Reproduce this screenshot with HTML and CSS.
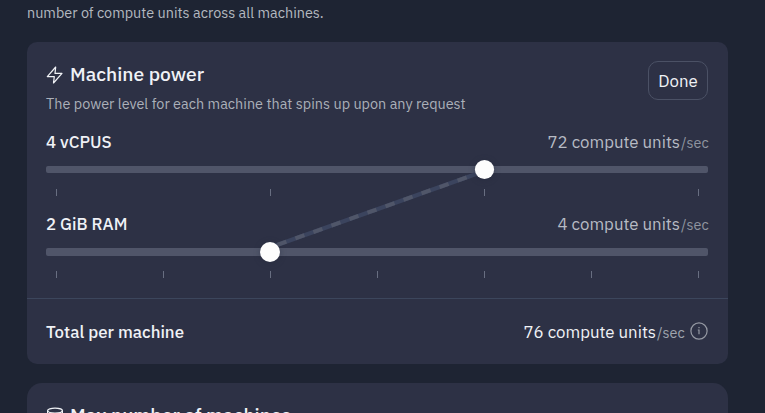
FILE: index.html
```
<!DOCTYPE html>
<html lang="en">
<head>
<meta charset="utf-8">
<title>Machine power</title>
<link rel="stylesheet" href="styles.css">
</head>
<body>
<main class="page">
  <p class="intro">number of compute units across all machines.</p>
  <section class="card">
    <header class="card-head">
      <div>
        <h2 class="title">
          <svg class="icon" width="18" height="18" viewBox="0 0 18 18"><path d="M9.7 1 1.3 10.6H8.3L7.5 17 16 7.4H9L9.7 1Z" fill="none" stroke="currentColor" stroke-width="1.2" stroke-linejoin="round"/></svg>
          <span>Machine power</span>
        </h2>
        <p class="desc">The power level for each machine that spins up upon any request</p>
      </div>
      <button class="done">Done</button>
    </header>
    <div class="sliders">
      <div class="row"><span class="label">4 vCPUS</span><span class="cost">72 compute units<span class="sec">/sec</span></span></div>
      <div class="track track-cpu"></div>
      <div class="ticks"><i></i><i></i><i></i><i></i></div>
      <div class="row"><span class="label">2 GiB RAM</span><span class="cost">4 compute units<span class="sec">/sec</span></span></div>
      <div class="track track-ram"></div>
      <div class="ticks ticks-ram"><i></i><i></i><i></i><i></i><i></i><i></i><i></i></div>
      <svg class="link" width="662" height="140" viewBox="46 130 662 140">
        <path d="M270 247.5 484.5 171" stroke="#3b445e" stroke-width="4"/>
        <path d="M270 247.5 484.5 171" stroke="#505669" stroke-width="4" stroke-dasharray="9.57 9.57" stroke-dashoffset="11.35"/>
        <circle class="thumb" cx="484.5" cy="169.5" r="9.6"/>
        <circle class="thumb" cx="270" cy="252" r="10"/>
      </svg>
    </div>
    <footer class="total">
      <span class="label">Total per machine</span>
      <span class="cost cost-total">76 compute units<span class="sec">/sec</span></span>
      <svg class="info" width="18" height="18" viewBox="0 0 18 18"><circle cx="9" cy="9" r="8.1" fill="none" stroke="currentColor" stroke-width="1.2"/><path d="M7.8 8H9v4.3M9 5v1.2" fill="none" stroke="currentColor" stroke-width="1.2"/></svg>
    </footer>
  </section>
  <section class="card card-next">
    <h2 class="title title-next">
      <svg class="icon" width="18" height="18" viewBox="0 0 18 18"><g fill="none" stroke="currentColor" stroke-width="1.2"><ellipse cx="9" cy="3.6" rx="7.4" ry="2.5"/><path d="M1.6 3.6v10.8c0 3.4 14.8 3.4 14.8 0V3.6M1.6 9c0 3.4 14.8 3.4 14.8 0"/></g></svg>
      <span>Max number of machines</span>
    </h2>
  </section>
</main>
</body>
</html>
```
FILE: styles.css
```
* { box-sizing: border-box; }
body {
  margin: 0;
  background: #1e2433;
  color: #f0f2f6;
  font-family: "IBM Plex Sans", Roboto, "Liberation Sans", sans-serif;
  font-size: 16.85px;
}
.page { width: 701px; height: 413px; margin-left: 27px; overflow: hidden; }
p, h2 { margin: 0; white-space: nowrap; }
.intro { height: 42px; padding-top: 3px; font-size: 14.42px; line-height: 20px; color: #b4b9c0; }
.card { height: 322px; border-radius: 10px; background: #2d3145; }
.card-head { display: flex; justify-content: space-between; align-items: flex-start; height: 88px; padding: 19px 20px 0 19px; }
.title { display: flex; align-items: center; gap: 6px; height: 27px; font-size: 19.25px; line-height: 25px; font-weight: 500; }
.title span { margin-top: -2px; }
.icon { flex: none; }
.desc { margin-top: 6px; font-size: 14.43px; line-height: 20px; color: #abb0b9; }
.done { width: 60px; height: 39px; padding: 0; border: 1px solid #4b5165; border-radius: 10px; background: transparent; color: #f0f2f6; font: inherit; }
.sliders { position: relative; height: 168px; padding: 0 20px 0 19px; }
.row { display: flex; justify-content: space-between; align-items: center; height: 24px; line-height: 24px; white-space: nowrap; }
.label { font-weight: 500; }
.cost { color: #b7bbc4; margin-right: -1px; }
.sec { display: inline-block; width: 29px; padding-left: 1px; font-size: 14.4px; color: #8f949f; }
.track { border-radius: 2px; background: #505569; }
.track-cpu { height: 7px; margin-top: 12px; }
.track-ram { height: 8px; margin-top: 12px; }
.ticks { display: flex; justify-content: space-between; height: 23px; margin-top: 16px; padding: 0 9px 0 10px; }
.ticks-ram { margin-top: 15px; }
.ticks i { width: 1px; height: 7px; background: #686e81; }
.link { position: absolute; left: 19px; top: 0; overflow: visible; }
.thumb { fill: #fdfdfd; filter: drop-shadow(0 1px 3px #20253666); }
.total { display: flex; align-items: center; height: 66px; padding: 0 20px 0 19px; border-top: 1px solid #3c465c; line-height: 24px; white-space: nowrap; }
.cost-total { margin: 1px 5px 0 auto; color: #f0f2f6; }
.cost-total .sec { color: #9fa4ae; }
.info { margin-top: -2px; color: #9599a3; }
.card-next { height: 120px; margin-top: 19px; padding: 19px; border-radius: 15px; }
.title-next span { margin-top: -2px; }
```
